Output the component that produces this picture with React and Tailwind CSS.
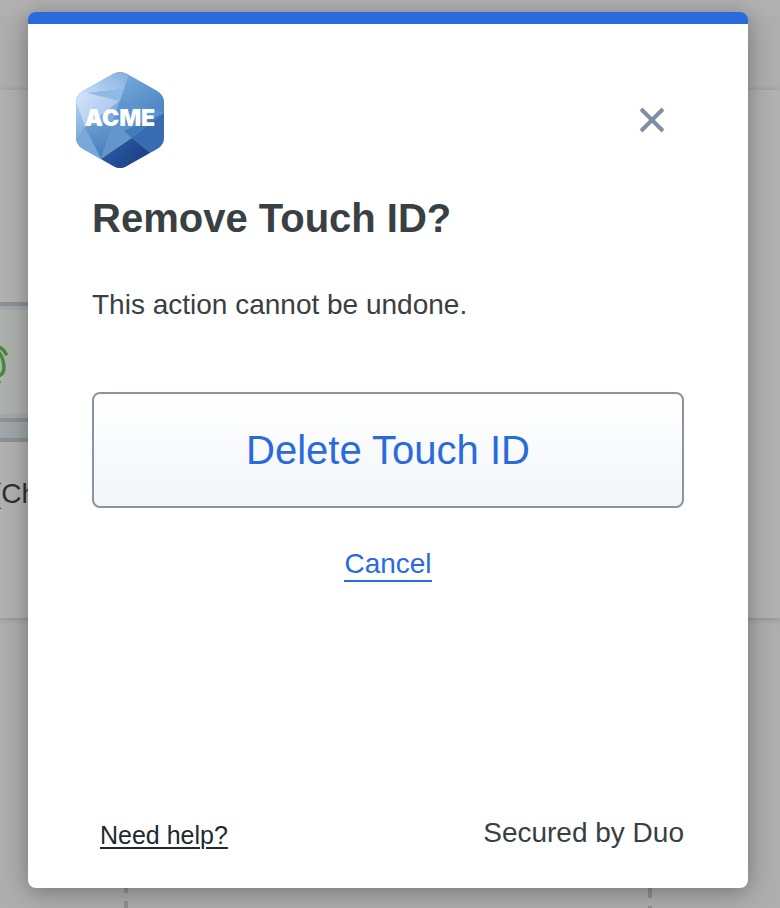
function AcmeLogo() {
  return (
    <svg className="h-24 w-[88px]" viewBox="0 0 88 96" role="img" aria-label="ACME">
      <defs>
        <clipPath id="hexagon">
          <path d="M38 1.5Q44-1.5 50 1.5L81 19Q88 23 88 31V65Q88 73 81 77L50 94.5Q44 97.5 38 94.5L7 77Q0 73 0 65V31Q0 23 7 19Z" />
        </clipPath>
        <linearGradient id="top" x1="0" y1="0.8" x2="1" y2="0.2">
          <stop offset="0" stopColor="#c9dcf8" />
          <stop offset="1" stopColor="#85b2e0" />
        </linearGradient>
        <linearGradient id="right" x1="0" y1="0" x2="0.6" y2="1">
          <stop offset="0" stopColor="#7baddd" />
          <stop offset="1" stopColor="#5189c5" />
        </linearGradient>
        <linearGradient id="light" x1="0" y1="0" x2="1" y2="0.6">
          <stop offset="0" stopColor="#d6e3fb" />
          <stop offset="1" stopColor="#a5c6ec" />
        </linearGradient>
        <linearGradient id="left" x1="0" y1="0" x2="0" y2="1">
          <stop offset="0" stopColor="#b4cdf0" />
          <stop offset="1" stopColor="#79a9d9" />
        </linearGradient>
        <linearGradient id="bottom" x1="0" y1="0" x2="0.3" y2="1">
          <stop offset="0" stopColor="#6c9fd3" />
          <stop offset="1" stopColor="#4a80bb" />
        </linearGradient>
        <linearGradient id="deep" x1="0" y1="0" x2="1" y2="0.7">
          <stop offset="0" stopColor="#2d60a8" />
          <stop offset="1" stopColor="#1d3e83" />
        </linearGradient>
      </defs>
      <g clipPath="url(#hexagon)">
        <path fill="#5c92ca" d="M0 0H88V96H0Z" />
        <path fill="url(#top)" d="M0 23L38 0H54L48 17L14 21Z" />
        <path fill="url(#right)" d="M54 0L88 22V41L44 29L48 17Z" />
        <path fill="#91b9e5" d="M10 21L48 17L44 29Z" />
        <path fill="url(#light)" d="M0 17L12 21L44 29L9 55L0 31Z" />
        <path fill="url(#left)" d="M0 31L9 55L0 70Z" />
        <path fill="#82aede" d="M44 29L37 49L9 55Z" />
        <path fill="#5d94cc" d="M44 29L88 41L56 66L37 49Z" />
        <path fill="url(#bottom)" d="M9 55L37 49L25 87Z" />
        <path fill="#78a8da" d="M9 55L25 87L0 73V70Z" />
        <path fill="#6496cc" d="M37 49L56 66L25 87Z" />
        <path fill="#447bb9" d="M88 41L56 66L48 59Z" />
        <path fill="#376db0" d="M88 41V73L74 81L56 66Z" />
        <path fill="url(#deep)" d="M25 87L56 66L74 81L44 98Z" />
      </g>
      <text x="44" y="54" textAnchor="middle" className="fill-white font-['Inter',sans-serif] text-[23px] font-black">
        ACME
      </text>
    </svg>
  );
}

function PageBehind() {
  return (
    <div aria-hidden="true" className="absolute inset-0 flex flex-col overflow-hidden bg-[#aeaeae] text-[#2b3133]">
      <div className="h-4 bg-[#b1b1b1]" />
      <div className="h-[74px]" />
      <div className="h-[528px] bg-[#b1b1b1] pt-[212px] shadow-[0_1px_6px_rgba(0,0,0,0.2)]">
        <div className="h-[120px] w-24 border-y-4 border-[#8c9193] bg-[#adb0ad]">
          <div className="flex h-full items-center border-y-4 border-[#a4a8ac]">
            <svg className="h-24 w-4" viewBox="0 0 16 96" fill="none" stroke="#438b34" strokeWidth="3.4" strokeLinecap="round">
              <path d="M-4 32C1 33 4 36 6 40M-4 37C2 39 4 48 4 54C4 59 2 61 -2 62M-3 69L-1 68" />
            </svg>
          </div>
        </div>
        <div className="h-5 w-24 border-b-4 border-[#8c9193] bg-[#a0a6a9]" />
        <p className="-ml-2 pt-9 text-[28px] leading-8">(Chrome)</p>
      </div>
      <div className="mr-32 ml-[124px] flex flex-1 justify-between pt-[267px]">
        <div className="w-1 bg-[repeating-linear-gradient(#909090_0_8px,transparent_8px_16px)]" />
        <div className="w-1 bg-[repeating-linear-gradient(#909090_0_13px,transparent_13px_21px)]" />
      </div>
    </div>
  );
}

export default function App() {
  return (
    <div className="relative flex min-h-screen flex-col overflow-hidden pt-3 pr-8 pb-5 pl-7 font-['Liberation_Sans',Arial,sans-serif]">
      <PageBehind />
      <main
        role="dialog"
        aria-labelledby="title"
        className="relative flex flex-1 flex-col overflow-hidden rounded-lg border-t-12 border-[#296bdc] bg-white px-16 pt-12 pb-8 text-[#384043] shadow-[0_4px_24px_rgba(0,0,0,0.34)]"
      >
        <header className="-ml-4 flex items-center justify-between">
          <AcmeLogo />
          <button type="button" aria-label="Close" className="flex size-16 items-center justify-center">
            <svg className="size-7" viewBox="0 0 28 28" fill="none" stroke="#7e8fa5" strokeWidth="4" strokeLinecap="butt">
              <path d="M3 3L25 25M25 3L3 25" />
            </svg>
          </button>
        </header>
        <h1 id="title" className="mt-6 text-[40px] leading-[52px] font-bold">Remove Touch ID?</h1>
        <p className="mt-10 text-[28px] leading-[42px]">This action cannot be undone.</p>
        <button
          type="button"
          className="mt-[66px] h-29 rounded-lg border-2 border-[#8a94a1] bg-linear-to-b from-white to-[#f3f5f8] text-[40px] text-[#296bdc]"
        >
          Delete Touch ID
        </button>
        <a href="#cancel" className="mt-10 self-center border-b-2 border-[#296bdc] text-[28px] leading-8 text-[#296bdc]">
          Cancel
        </a>
        <footer className="mt-auto flex items-end justify-between pl-2">
          <a href="#help" className="text-[25px] leading-[42px] text-[#202a2e] underline decoration-2 underline-offset-3">Need help?</a>
          <span className="pb-0.5 text-[28px] leading-[42px]">Secured by Duo</span>
        </footer>
      </main>
    </div>
  );
}
